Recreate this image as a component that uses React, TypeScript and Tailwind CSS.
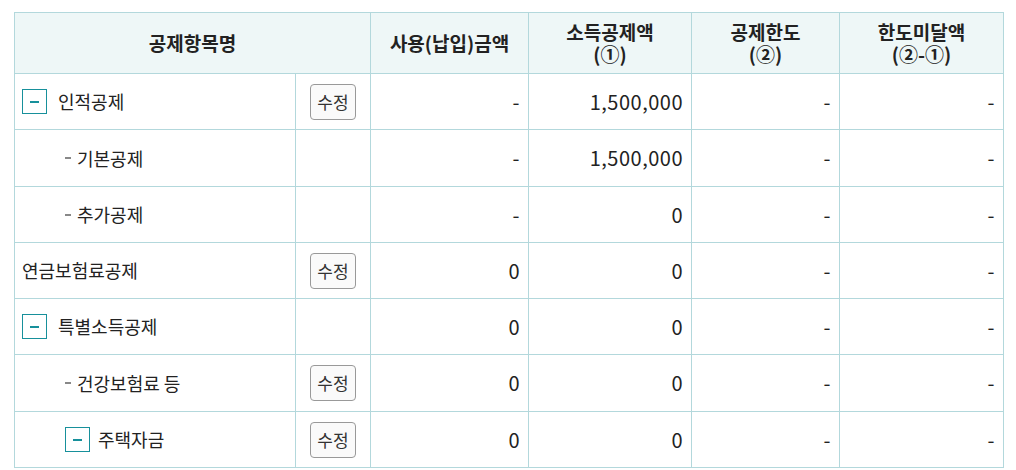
import React from "react";

type Row = {
  label: string;
  level: 0 | 1;
  toggle?: boolean;
  edit?: boolean;
  vals: [string, string, string, string];
  h: string;
};

const rows: Row[] = [
  { label: "인적공제", level: 0, toggle: true, edit: true, vals: ["-", "1,500,000", "-", "-"], h: "h-[56px]" },
  { label: "기본공제", level: 1, vals: ["-", "1,500,000", "-", "-"], h: "h-[57px]" },
  { label: "추가공제", level: 1, vals: ["-", "0", "-", "-"], h: "h-[56px]" },
  { label: "연금보험료공제", level: 0, edit: true, vals: ["0", "0", "-", "-"], h: "h-[56px]" },
  { label: "특별소득공제", level: 0, toggle: true, vals: ["0", "0", "-", "-"], h: "h-[56px]" },
  { label: "건강보험료 등", level: 1, edit: true, vals: ["0", "0", "-", "-"], h: "h-[57px]" },
  { label: "주택자금", level: 1, toggle: true, edit: true, vals: ["0", "0", "-", "-"], h: "h-[56px]" },
];

function Toggle() {
  return (
    <span className="flex h-[25px] w-[25px] shrink-0 items-center justify-center border border-[#17909b] bg-white">
      <span className="block h-[2px] w-[9px] bg-[#17909b]" />
    </span>
  );
}

function EditBtn() {
  return (
    <button className="flex h-[36px] w-[46px] items-center justify-center rounded-[4px] border border-[#999] bg-[#fafafa] text-[17px] text-[#333]">
      수정
    </button>
  );
}

export default function App() {
  const cell = "border-r border-b border-[#b3d8dc]";
  const head = `${cell} flex h-[61px] flex-col items-center justify-center bg-[#eef7f7] text-[19px] font-bold leading-[22px]`;
  return (
    <div
      className="min-h-[470px] w-[1016px] bg-white pl-[14px] pt-[12px] text-[#222]"
      style={{ fontFamily: '"Noto Sans CJK KR", "Noto Sans", sans-serif' }}
    >
      <div className="grid w-[990px] grid-cols-[281px_75px_158px_163px_148px_164px] border-l border-t border-[#b3d8dc] text-[18px]">
        <div className={`${head} col-span-2`}>공제항목명</div>
        <div className={head}>사용(납입)금액</div>
        <div className={head}>
          <span>소득공제액</span>
          <span>(①)</span>
        </div>
        <div className={head}>
          <span>공제한도</span>
          <span>(②)</span>
        </div>
        <div className={head}>
          <span>한도미달액</span>
          <span>(②-①)</span>
        </div>

        {rows.map((r, i) => (
          <React.Fragment key={i}>
            <div className={`${cell} ${r.h} flex items-center ${r.level === 1 ? "pl-[50px]" : "pl-[7px]"}`}>
              {r.toggle ? (
                <>
                  <Toggle />
                  <span className={r.level === 1 ? "ml-[8px]" : "ml-[11px]"}>{r.label}</span>
                </>
              ) : r.level === 1 ? (
                <>
                  <span className="block h-[2px] w-[6px] bg-[#888]" />
                  <span className="ml-[6px]">{r.label}</span>
                </>
              ) : (
                <span>{r.label}</span>
              )}
            </div>
            <div className={`${cell} ${r.h} flex items-center justify-center`}>{r.edit ? <EditBtn /> : null}</div>
            {r.vals.map((v, j) => (
              <div key={j} className={`${cell} ${r.h} flex items-center justify-end pr-[8px] text-[20px] tracking-[0.5px]`}>
                {v}
              </div>
            ))}
          </React.Fragment>
        ))}
      </div>
    </div>
  );
}
